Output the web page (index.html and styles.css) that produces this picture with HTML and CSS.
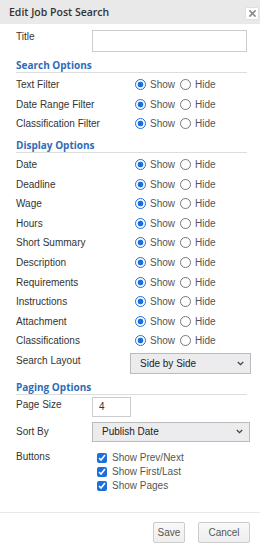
FILE: index.html
```html
<!DOCTYPE html>
<html lang="en">
<head>
    <meta charset="UTF-8">
    <meta name="viewport" content="width=device-width, initial-scale=1.0">
    <title>Edit Job Post Search</title>
    <link rel="stylesheet" href="styles.css">
</head>
<body>
    <div class="dialog">
        <!-- Dialog Header -->
        <div class="dialog-header">
            <span class="dialog-title">Edit Job Post Search</span>
            <button class="close" type="button" aria-label="Close">
                <svg width="7" height="7" viewBox="0 0 7 7"><path d="M1 1L6 6M6 1L1 6" stroke="#8a8a8a" stroke-width="1.7" stroke-linecap="square"/></svg>
            </button>
        </div>

        <div class="dialog-body">
            <div class="field title-row">
                <label class="label" for="title">Title</label>
                <input type="text" id="title" class="text title-input">
            </div>

            <h3 class="section">Search Options</h3>
            <div class="choice">
                <span class="label">Text Filter</span>
                <span class="radios"><input type="radio" name="f1" checked><span>Show</span><input type="radio" name="f1"><span>Hide</span></span>
            </div>
            <div class="choice">
                <span class="label">Date Range Filter</span>
                <span class="radios"><input type="radio" name="f2" checked><span>Show</span><input type="radio" name="f2"><span>Hide</span></span>
            </div>
            <div class="choice">
                <span class="label">Classification Filter</span>
                <span class="radios"><input type="radio" name="f3" checked><span>Show</span><input type="radio" name="f3"><span>Hide</span></span>
            </div>

            <h3 class="section">Display Options</h3>
            <div class="choice">
                <span class="label">Date</span>
                <span class="radios"><input type="radio" name="d1" checked><span>Show</span><input type="radio" name="d1"><span>Hide</span></span>
            </div>
            <div class="choice">
                <span class="label">Deadline</span>
                <span class="radios"><input type="radio" name="d2" checked><span>Show</span><input type="radio" name="d2"><span>Hide</span></span>
            </div>
            <div class="choice">
                <span class="label">Wage</span>
                <span class="radios"><input type="radio" name="d3" checked><span>Show</span><input type="radio" name="d3"><span>Hide</span></span>
            </div>
            <div class="choice">
                <span class="label">Hours</span>
                <span class="radios"><input type="radio" name="d4" checked><span>Show</span><input type="radio" name="d4"><span>Hide</span></span>
            </div>
            <div class="choice">
                <span class="label">Short Summary</span>
                <span class="radios"><input type="radio" name="d5" checked><span>Show</span><input type="radio" name="d5"><span>Hide</span></span>
            </div>
            <div class="choice">
                <span class="label">Description</span>
                <span class="radios"><input type="radio" name="d6" checked><span>Show</span><input type="radio" name="d6"><span>Hide</span></span>
            </div>
            <div class="choice">
                <span class="label">Requirements</span>
                <span class="radios"><input type="radio" name="d7" checked><span>Show</span><input type="radio" name="d7"><span>Hide</span></span>
            </div>
            <div class="choice">
                <span class="label">Instructions</span>
                <span class="radios"><input type="radio" name="d8" checked><span>Show</span><input type="radio" name="d8"><span>Hide</span></span>
            </div>
            <div class="choice">
                <span class="label">Attachment</span>
                <span class="radios"><input type="radio" name="d9" checked><span>Show</span><input type="radio" name="d9"><span>Hide</span></span>
            </div>
            <div class="choice">
                <span class="label">Classifications</span>
                <span class="radios"><input type="radio" name="d10" checked><span>Show</span><input type="radio" name="d10"><span>Hide</span></span>
            </div>
            <div class="choice layout-row">
                <span class="label">Search Layout</span>
                <span class="select layout-select">Side by Side<svg width="7" height="5" viewBox="0 0 7 5"><path d="M0.8 1L3.5 3.7L6.2 1" fill="none" stroke="#444" stroke-width="1.3"/></svg></span>
            </div>

            <h3 class="section">Paging Options</h3>
            <div class="field">
                <label class="label" for="page-size">Page Size</label>
                <input type="text" id="page-size" class="text size-input" value="4">
            </div>
            <div class="field sort-row">
                <span class="label">Sort By</span>
                <span class="select sort-select">Publish Date<svg width="7" height="5" viewBox="0 0 7 5"><path d="M0.8 1L3.5 3.7L6.2 1" fill="none" stroke="#444" stroke-width="1.3"/></svg></span>
            </div>
            <div class="field buttons-row">
                <span class="label">Buttons</span>
                <span class="checks">
                    <span class="check"><input type="checkbox" checked>Show Prev/Next</span>
                    <span class="check"><input type="checkbox" checked>Show First/Last</span>
                    <span class="check"><input type="checkbox" checked>Show Pages</span>
                </span>
            </div>
        </div>

        <!-- Dialog Footer -->
        <div class="dialog-footer">
            <button type="button" class="btn btn-save">Save</button>
            <button type="button" class="btn btn-cancel">Cancel</button>
        </div>
    </div>
</body>
</html>
```

FILE: styles.css
```css
body {
    margin: 0;
    font-family: "Liberation Sans", Arial, sans-serif;
    font-size: 10px;
    color: #333;
    background-color: #fff;
}
.dialog {
    width: 260px;
    height: 546px;
    display: flex;
    flex-direction: column;
}
.dialog-header {
    height: 24px;
    background-color: #e9e9e9;
    display: flex;
    align-items: center;
    justify-content: space-between;
    padding: 0 1px 0 9px;
    flex-shrink: 0;
}
.dialog-title {
    font-family: "Open Sans", sans-serif;
    font-weight: 600;
    font-size: 10.5px;
    color: #333;
}
.close {
    width: 14px;
    height: 13px;
    margin-top: 2px;
    padding: 0;
    border: 1px solid #e0e0e0;
    border-radius: 2px;
    background-color: #fff;
    display: flex;
    align-items: center;
    justify-content: center;
}
.dialog-body {
    flex: 1;
    padding: 6px 9px 0 16px;
}
.label {
    color: #333;
}
.field {
    display: grid;
    grid-template-columns: 76px 1fr;
    align-items: start;
    margin-bottom: 5px;
}
.field .label {
    padding-top: 2px;
}
.title-row {
    margin-bottom: 6px;
}
.title-row .label {
    padding-top: 1px;
}
.sort-row .label {
    padding-top: 4px;
}
.text {
    box-sizing: border-box;
    height: 22px;
    border: 1px solid #ccc;
    padding: 0 6px;
    font-family: "Liberation Sans", Arial, sans-serif;
    font-size: 10px;
    color: #333;
    margin: 0;
}
.title-input {
    width: 155px;
}
.size-input {
    width: 39px;
    height: 20px;
}
.section {
    font-family: "Open Sans", sans-serif;
    font-weight: 700;
    font-size: 10px;
    line-height: 14px;
    color: #2e6cb7;
    margin: 4px 4px 2px 0;
    border-bottom: 1px solid #ddd;
}
.choice {
    display: grid;
    grid-template-columns: 114px 1fr;
    align-items: center;
    height: 19.6px;
}
.radios {
    display: flex;
    align-items: center;
    color: #555;
}
.radios input {
    appearance: none;
    width: 11px;
    height: 11px;
    margin: 0 4px 0 5px;
    border: 1px solid #777;
    border-radius: 50%;
    box-sizing: border-box;
}
.radios input:checked {
    border-color: #1a6fe0;
    background: radial-gradient(circle, #1a6fe0 0 2.6px, #fff 3.2px);
}
.layout-row {
    height: 23px;
    margin-top: 2px;
    align-items: start;
}
.layout-row .label {
    padding-top: 2px;
}
.select {
    box-sizing: border-box;
    height: 21px;
    border: 1px solid #bbb;
    background-color: #ececef;
    display: flex;
    align-items: center;
    justify-content: space-between;
    padding: 0 6px 0 9px;
    color: #222;
}
.layout-select {
    width: 121px;
}
.sort-select {
    width: 158px;
    height: 20px;
}
.buttons-row {
    margin-top: 9px;
}
.buttons-row .label {
    padding-top: 0;
}
.checks {
    display: flex;
    flex-direction: column;
}
.check {
    display: flex;
    align-items: center;
    height: 14px;
    color: #555;
}
.check input {
    width: 10px;
    height: 10px;
    margin: 0 5px 0 5px;
    accent-color: #1a6fe0;
}
.dialog-footer {
    border-top: 1px solid #e8e8e8;
    padding: 9px 10px 3px;
    display: flex;
    justify-content: flex-end;
    gap: 13px;
}
.btn {
    height: 21px;
    padding: 0;
    border: 1px solid #ccc;
    border-radius: 2px;
    background: linear-gradient(#f8f8f8, #eeeeee);
    color: #555;
    font-family: "Liberation Sans", Arial, sans-serif;
    font-size: 10px;
}
.btn-save {
    width: 32px;
}
.btn-cancel {
    width: 52px;
}
```
